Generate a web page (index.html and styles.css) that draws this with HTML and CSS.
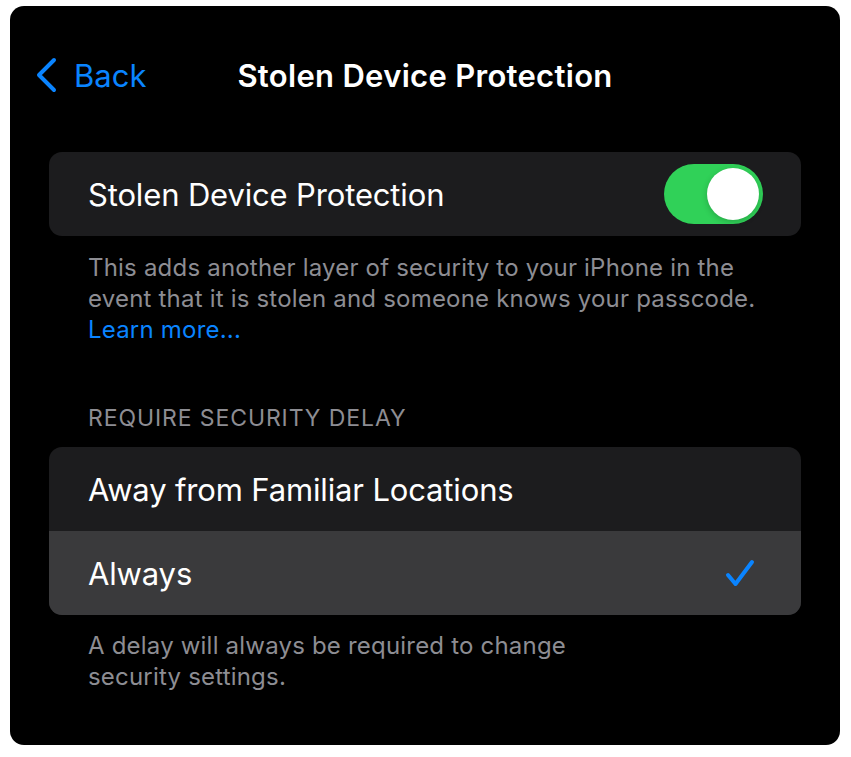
FILE: index.html
```html
<!DOCTYPE html>
<html>
<head>
  <meta charset="utf-8">
  <title>Stolen Device Protection</title>
  <link rel="stylesheet" href="styles.css">
</head>
<body>
  <div class="screen">
    <div class="nav">
      <a class="back">
        <svg class="chevron" width="22" height="36" viewBox="0 0 22 36">
          <path d="M18 3 L3 18 L18 33" fill="none" stroke="#0a84ff" stroke-width="4" stroke-linecap="round" stroke-linejoin="round"/>
        </svg>
        <span>Back</span>
      </a>
      <div class="title">Stolen Device Protection</div>
      <div></div>
    </div>

    <div class="content">
      <div class="card">
        <div class="row">
          <span class="label">Stolen Device Protection</span>
          <div class="switch on"><div class="knob"></div></div>
        </div>
      </div>
      <p class="footer">This adds another layer of security to your iPhone in the event that it is stolen and someone knows your passcode. <a class="link">Learn more...</a></p>

      <div class="header">REQUIRE SECURITY DELAY</div>
      <div class="card">
        <div class="row">
          <span class="label">Away from Familiar Locations</span>
        </div>
        <div class="row selected">
          <span class="label">Always</span>
          <svg class="check" width="30" height="28" viewBox="0 0 30 28">
            <path d="M3 16 L10.5 25 L27 3" fill="none" stroke="#0a84ff" stroke-width="4" stroke-linecap="round" stroke-linejoin="round"/>
          </svg>
        </div>
      </div>
      <p class="footer narrow">A delay will always be required to change security settings.</p>
    </div>
  </div>
</body>
</html>
```

FILE: styles.css
```css
html, body{
  margin: 0;
  background: #fff;
}
body{
  font-family: Inter, "Noto Sans", sans-serif;
  -webkit-font-smoothing: antialiased;
}

.screen{
  margin: 6px 0 0 10px;
  width: 830px;
  height: 739px;
  background: #000;
  border-radius: 14px;
  overflow: hidden;
}

.nav{
  height: 138px;
  display: grid;
  grid-template-columns: 1fr auto 1fr;
  align-items: center;
}
.back{
  display: flex;
  align-items: center;
  gap: 16px;
  padding-left: 26px;
  color: #0a84ff;
  font-size: 31px;
}
.title{
  color: #fff;
  font-size: 31px;
  font-weight: 600;
  letter-spacing: 0.3px;
}

.content{
  padding: 8px 39px 0;
}

.card{
  background: #1c1c1e;
  border-radius: 13px;
  overflow: hidden;
}
.row{
  height: 84px;
  display: flex;
  align-items: center;
  justify-content: space-between;
  padding: 0 38px 0 39px;
}
.row.selected{
  background: #3a3a3c;
  padding-right: 46px;
}
.label{
  color: #fff;
  font-size: 31px;
  letter-spacing: -0.15px;
}

.switch{
  width: 99px;
  height: 60px;
  border-radius: 30px;
  background: #39393d;
  position: relative;
}
.switch.on{
  background: #30d158;
}
.knob{
  position: absolute;
  top: 4px;
  right: 4px;
  width: 52px;
  height: 52px;
  border-radius: 50%;
  background: #fff;
  box-shadow: 0 2px 6px rgba(0,0,0,0.2);
}

.footer{
  margin: 16px 0 0;
  padding: 0 39px;
  color: #8d8d93;
  font-size: 24px;
  line-height: 31px;
  letter-spacing: 0.2px;
}
.footer.narrow{
  margin-top: 15px;
  width: 500px;
}
.link{
  color: #0a84ff;
}

.header{
  margin: 58px 0 14px;
  padding: 0 39px;
  color: #8d8d93;
  font-size: 23px;
  line-height: 30px;
  letter-spacing: 0.9px;
}
```
